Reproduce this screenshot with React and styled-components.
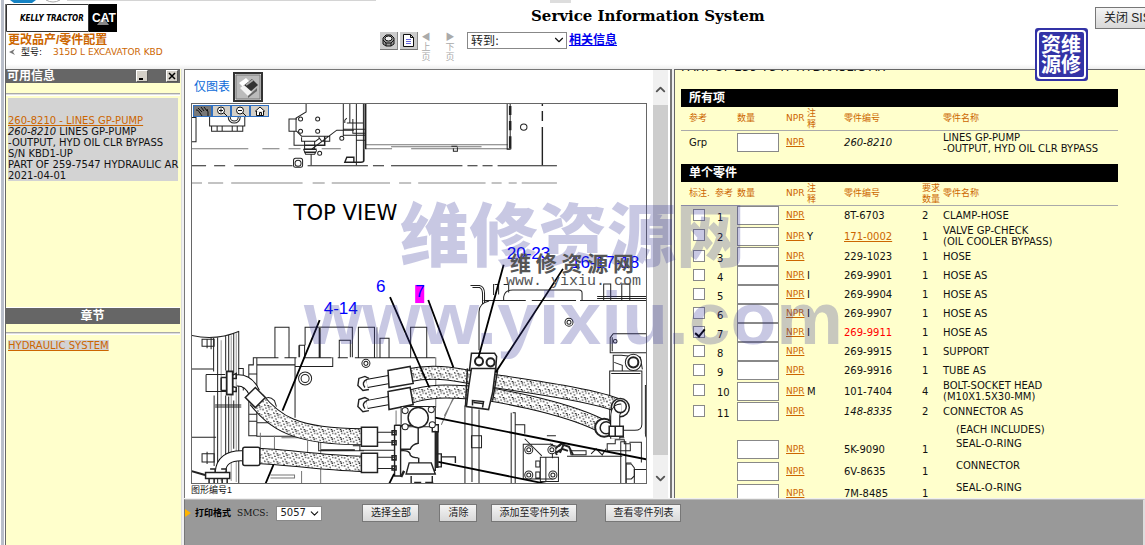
import React from "react";
import styled, { createGlobalStyle, css } from "styled-components";
import { ChevronDown, ChevronUp } from "lucide-react";

const sans = `"DejaVu Sans", "Noto Sans CJK SC", sans-serif`;
const cjk = `"Liberation Sans", "Noto Sans CJK SC", sans-serif`;
const orange = "#cc6600";
const cream = "#ffffcc";

const GlobalStyle = createGlobalStyle`
    * {
        box-sizing: border-box;
    }
    body {
        margin: 0;
        background: #fff;
        overflow: hidden;
    }
    h1, h2, p {
        margin: 0;
    }
    button, input, select {
        font: inherit;
        margin: 0;
        padding: 0;
    }
`;

const Page = styled.div`
    position: relative;
    display: flex;
    flex-direction: column;
    height: 100vh;
    overflow: hidden;
    border-left: 1px solid #fff;
    font-family: ${sans};
    font-size: 10px;
    line-height: 11px;
    color: #111;
`;

const Shell = styled.div`
    flex: 1;
    min-height: 0;
    display: flex;
    flex-direction: column;
    border-left: 3px solid #b9bec9;
    padding-left: 1px;
`;

const BrowserEdge = styled.svg`
    display: block;
    flex: none;
    width: 100%;
    height: 4px;
`;

const Header = styled.header`
    flex: none;
    display: grid;
    grid-template-columns: 374px minmax(0, 1fr) 50px;
    height: 65px;
    border-left: 1px solid #777;
    background: linear-gradient(#fff 60px, #eee);
`;

const Logo = styled.svg`
    display: block;
    width: 112px;
    height: 28px;
`;

const ProductLink = styled.a`
    display: block;
    margin-left: 2px;
    font: bold 12px/16px ${cjk};
    color: ${orange};
    text-decoration: none;
`;

const Model = styled.p`
    display: flex;
    align-items: center;
    gap: 6px;
    margin-left: 3px;
    font-size: 9px;
    line-height: 8px;
    b {
        font-weight: 400;
        margin-left: 5px;
        color: ${orange};
    }
`;

const Title = styled.h1`
    padding: 5px 0 0 151px;
    font: bold 15px/15px "DejaVu Serif", serif;
    color: #000;
    white-space: nowrap;
`;

const Tools = styled.div`
    display: flex;
    align-items: flex-start;
    padding-top: 8px;
`;

const ToolButton = styled.button`
    width: 18px;
    height: 18px;
    margin-right: 2px;
    border: 0;
    border-bottom: 1px solid #777;
    border-right: 1px solid #888;
    background: #ccc;
    svg {
        display: block;
        width: 17px;
        height: 17px;
    }
`;

const PageTurn = styled.button`
    width: 12px;
    margin: 0 0 0 ${(props) => (props.$next ? 12 : 0)}px;
    padding: 0;
    border: 0;
    background: none;
    color: #aaa;
    font: 9px/10px ${cjk};
    span {
        display: block;
    }
`;

const SelectBox = styled.span`
    position: relative;
    display: inline-block;
    width: ${(props) => props.$width}px;
    margin-left: ${(props) => props.$gap}px;
    select {
        display: block;
        appearance: none;
        width: 100%;
        height: ${(props) => props.$height}px;
        padding: 0 3px;
        border: 1px solid #888;
        border-radius: 0;
        background: #fff;
        color: #222;
        font-size: ${(props) => props.$size}px;
        line-height: 12px;
    }
    svg {
        position: absolute;
        right: 1px;
        top: 1px;
        pointer-events: none;
    }
`;

const RelatedLink = styled.a`
    margin-left: 2px;
    font: bold 12px/16px ${cjk};
    color: #0000ee;
`;

const GreyButton = styled.button`
    height: 18px;
    width: ${(props) => props.$width}px;
    border: 1px solid #777;
    background: linear-gradient(#f4f4f4, #d8d8d8);
    color: #222;
    font: 10px/14px ${cjk};
    white-space: nowrap;
    ${(props) =>
        props.$large &&
        css`
            height: 22px;
            margin-top: 3px;
            padding-left: 8px;
            text-align: left;
            font-size: 12px;
            overflow: hidden;
            border-right: 0;
        `}
`;

const Frames = styled.main`
    flex: 1;
    min-height: 0;
    display: grid;
    grid-template-columns: 176px minmax(0, 1fr) 471px;
    grid-template-rows: minmax(0, 1fr) 46px;
    column-gap: 2px;
    row-gap: 1px;
    border-left: 1px solid #666;
    background: #f0f0f0;
`;

const Side = styled.aside`
    grid-row: 1 / 3;
    display: flex;
    flex-direction: column;
    padding-right: 1px;
    border-right: 1px solid #ddd;
    background: ${cream};
    min-height: 0;
`;

const SideBar = styled.h2`
    flex: none;
    display: flex;
    align-items: center;
    justify-content: ${(props) => (props.$center ? "center" : "flex-start")};
    gap: 18px;
    height: ${(props) => (props.$center ? 16 : 14)}px;
    padding: 0 2px 0 1px;
    background: #666;
    color: #fff;
    font: bold 12px/14px ${cjk};
    span {
        flex: ${(props) => (props.$center ? "none" : 1)};
    }
`;

const WindowButton = styled.button`
    width: 12px;
    height: 12px;
    border: 1px solid;
    border-color: #fff #555 #555 #fff;
    background: #d4d0c8;
    svg {
        display: block;
        width: 10px;
        height: 10px;
    }
`;

const Rule = styled.hr`
    width: 100%;
    height: 3px;
    margin: ${(props) => props.$top}px 0 2px;
    border: 0;
    border-top: 1px solid #aaa;
    border-bottom: 1px solid #fff;
    background: #ddd;
`;

const InfoCard = styled.div`
    margin: 0 2px;
    padding-top: 17px;
    background: #d3d3d3;
    white-space: nowrap;
    a {
        color: ${orange};
    }
`;

const SideTop = styled.section`
    flex: 0 0 239px;
    border-bottom: 1px solid #fff;
`;

const ChapterLink = styled.a`
    align-self: flex-start;
    margin: 3px 2px;
    background: #d3d3d3;
    color: ${orange};
`;

const Viewer = styled.section`
    display: flex;
    min-height: 0;
    overflow: hidden;
    border: 1px solid #777;
    border-width: 1px 2px 0 1px;
    background: #fff;
`;

const ViewerBody = styled.div`
    flex: 1;
    min-width: 0;
    display: flex;
    flex-direction: column;
    padding: 0 6px;
`;

const ViewerHead = styled.div`
    flex: none;
    display: flex;
    align-items: center;
    height: 33px;
    gap: 3px;
    padding-left: 3px;
    font: 12px/16px ${cjk};
    a {
        color: #0a6ad8;
        text-decoration: none;
    }
`;

const PrintButton = styled.button`
    width: 30px;
    height: 30px;
    border: 2px solid #333;
    background: #ddd;
    svg {
        display: block;
        width: 26px;
        height: 26px;
    }
`;

const Canvas = styled.div`
    position: relative;
    flex: 1;
    min-height: 0;
    border: 1px solid #666;
    > svg {
        display: block;
        width: 100%;
        height: 100%;
    }
`;

const CanvasTools = styled.div`
    position: absolute;
    top: 1px;
    left: 1px;
    display: flex;
    button {
        width: 19px;
        height: 12px;
        border: 1px solid #2f6fc0;
        background: #d4d0c8;
    }
    button:first-child {
        background: #777;
    }
    svg {
        display: block;
        width: 17px;
        height: 10px;
    }
`;

const Caption = styled.p`
    flex: none;
    height: 14px;
    overflow: hidden;
    padding-top: 1px;
    font: 9px/11px ${cjk};
    span {
        display: block;
        padding-left: 6px;
    }
`;

const Scroll = styled.div`
    flex: none;
    display: flex;
    flex-direction: column;
    width: 15px;
    margin-right: 2px;
    background: #f0f0f0;
    button {
        height: 35px;
        border: 0;
        background: none;
        color: #555;
    }
    button:last-child {
        height: 43px;
    }
    svg {
        display: block;
        margin: 3px auto 0;
    }
`;

const Thumb = styled.div`
    flex: 1;
    background: #cdcdcd;
`;

const Parts = styled.section`
    min-height: 0;
    overflow: hidden;
    padding: 0 27px 0 6px;
    border-top: 1px solid #666;
    border-left: 1px solid #666;
    background: ${cream};
`;

const PartOf = styled.p`
    margin-top: -8px;
    height: 27px;
    font-size: 12px;
    line-height: 11px;
`;

const Bar = styled.h2`
    height: 18px;
    margin-top: ${(props) => props.$top || 0}px;
    padding-left: 8px;
    background: #000;
    color: #fff;
    font: bold 12px/18px ${cjk};
`;

const Table = styled.table`
    width: 100%;
    table-layout: fixed;
    border-collapse: separate;
    border-spacing: 0;
    td, th {
        padding: 0;
        text-align: left;
        font-weight: 400;
        white-space: nowrap;
    }
    th {
        height: 24px;
        color: ${orange};
        font-size: 9px;
        border-bottom: 1px solid #aaa;
    }
    a {
        color: ${orange};
    }
    td:first-child, th:first-child {
        padding-left: 8px;
    }
`;

const Row = styled.tr`
    height: ${(props) => props.$height}px;
    td:last-child {
        vertical-align: ${(props) => (props.$child ? "top" : "middle")};
        padding-left: ${(props) => (props.$child ? 13 : 0)}px;
    }
`;

const NprCell = styled.td`
    font-size: 9px;
`;

const Quantity = styled.input`
    display: block;
    width: 42px;
    height: 19px;
    border: 1px solid #888;
    background: #fff;
`;

const Check = styled.input`
    appearance: none;
    display: block;
    width: 12px;
    height: 12px;
    margin: 0 0 2px 4px !important;
    border: 1px solid #888;
    background: #fff;
    &:checked::after {
        content: "";
        display: block;
        width: 4px;
        height: 8px;
        margin-left: 3px;
        border: solid #000;
        border-width: 0 2px 2px 0;
        transform: rotate(40deg);
    }
`;

const RefCell = styled.td`
    && {
        padding: 3px 0 0 2px;
    }
`;

const NumberCell = styled.td`
    color: ${(props) => (props.$active ? "#ff0000" : "inherit")};
    font-style: ${(props) => (props.$italic ? "italic" : "normal")};
`;

const GroupText = styled.span`
    display: block;
    padding-top: 3px;
`;

const Footer = styled.footer`
    grid-column: 2 / 4;
    display: flex;
    align-items: flex-start;
    padding-top: 4px;
    border-top: 1px solid #bbb;
    border-left: 1px solid #777;
    border-right: 2px solid #ddd;
    background: #999;
`;

const PrintFormat = styled.a`
    display: flex;
    align-items: center;
    gap: 4px;
    height: 18px;
    color: #000;
    text-decoration: none;
    font: bold 9px/18px "Noto Sans CJK SC", sans-serif;
    svg {
        width: 6px;
        height: 10px;
    }
`;

const SmcsLabel = styled.label`
    display: flex;
    align-items: center;
    height: 18px;
    margin-left: 6px;
    font: 9px/18px "DejaVu Serif", serif;
    select {
        font-family: ${sans};
    }
`;

const Actions = styled.div`
    display: flex;
    margin-left: 40px;
    button:nth-child(2) {
        margin-left: 20px;
    }
    button:nth-child(3) {
        margin-left: 14px;
    }
    button:nth-child(4) {
        margin-left: 28px;
    }
`;

const Watermark = styled.div`
    position: absolute;
    top: 192px;
    left: 303px;
    pointer-events: none;
    white-space: nowrap;
    color: rgba(51, 51, 150, 0.27);
    font: bold 75px/84px "Liberation Sans", sans-serif;
    span {
        display: block;
        margin-bottom: 6px;
        padding-left: 96px;
        font: 900 69px/78px "Noto Sans CJK SC", sans-serif;
    }
`;

const SmallMark = styled.div`
    position: absolute;
    top: 251px;
    left: 505px;
    pointer-events: none;
    white-space: pre;
    color: #555;
    font: 15px/18px "Liberation Mono", monospace;
    span {
        display: block;
        padding-left: 4px;
        font: bold 21px/22px "Noto Sans CJK SC", sans-serif;
    }
`;

const Stamp = styled.div`
    position: absolute;
    top: 28px;
    right: 57px;
    width: 53px;
    height: 53px;
    padding: 2px;
    border-radius: 3px;
    background: #3333a6;
    div {
        height: 49px;
        padding: 2px;
        border: 2px solid #fff;
        border-radius: 4px;
        color: #fff;
        font: bold 20px/20px "Noto Sans CJK SC", sans-serif;
        white-space: pre;
    }
`;

const parts = [
    { ref: 1, number: "8T-6703", qty: 2, name: "CLAMP-HOSE" },
    { ref: 2, note: "Y", number: "171-0002", link: true, qty: 1, name: "VALVE GP-CHECK", detail: "(OIL COOLER BYPASS)" },
    { ref: 3, number: "229-1023", qty: 1, name: "HOSE" },
    { ref: 4, note: "I", number: "269-9901", qty: 1, name: "HOSE AS" },
    { ref: 5, note: "I", number: "269-9904", qty: 1, name: "HOSE AS" },
    { ref: 6, note: "I", number: "269-9907", qty: 1, name: "HOSE AS" },
    { ref: 7, note: "I", number: "269-9911", active: true, qty: 1, name: "HOSE AS" },
    { ref: 8, number: "269-9915", qty: 1, name: "SUPPORT" },
    { ref: 9, number: "269-9916", qty: 1, name: "TUBE AS" },
    { ref: 10, note: "M", number: "101-7404", qty: 4, name: "BOLT-SOCKET HEAD", detail: "(M10X1.5X30-MM)" },
    { ref: 11, number: "148-8335", italic: true, qty: 2, name: "CONNECTOR AS" },
    { group: "(EACH INCLUDES)" },
    { number: "5K-9090", qty: 1, name: "SEAL-O-RING", child: true },
    { number: "6V-8635", qty: 1, name: "CONNECTOR", child: true },
    { number: "7M-8485", qty: 1, name: "SEAL-O-RING", child: true },
];

const rowHeight = (part) => {
    if (part.group) return 17;
    return part.detail || part.child ? 22 : 19;
};

const Columns = () => (
    <colgroup>
        {[34, 22, 49, 21, 37, 78, 21].map((width, i) => (
            <col key={i} style={{ width }} />
        ))}
        <col />
    </colgroup>
);

const Note = () => (
    <>
        注
        <br />
        释
    </>
);

const Hose = ({ d, width = 15 }) => (
    <>
        <path d={d} stroke="#111" strokeWidth={width} />
        <path d={d} stroke="#fff" strokeWidth={width - 2} />
        <path d={d} stroke="url(#stipple)" strokeWidth={width - 2} />
    </>
);

const Tube = ({ d, width = 9 }) => (
    <>
        <path d={d} stroke="#111" strokeWidth={width} />
        <path d={d} stroke="#fff" strokeWidth={width - 2} />
    </>
);

const Bolts = ({ points, r = 2 }) =>
    points.map(([x, y]) => (
        <g key={`${x}-${y}`}>
            <circle cx={x} cy={y} r={r} fill="#fff" />
            {r > 3 && <circle cx={x} cy={y} r={r - 2} />}
        </g>
    ));

const Diagram = () => (
    <svg viewBox="192 105 454 377" preserveAspectRatio="xMinYMin slice" fill="none" stroke="#222" strokeWidth="1" role="img" aria-label="TOP VIEW">
        <defs>
            <pattern id="stipple" width="9" height="8" patternUnits="userSpaceOnUse">
                <path d="M1 1h1.500M5 2l1 1M8 0v1M3 4l1 1M6 5h1.500M0 6h1M4 7l1 1M8 6l-1 1" stroke="#000" strokeWidth="1" />
            </pattern>
        </defs>

        {/* frame at the top */}
        <path d="M191 149.500h57M262 149.500h17M288 149.500h12M321 149.500h19M365 145.500h141M365 149.500h26M410 149.500h100M390 147.500h90" stroke="#777" />
        <path d="M191 166.500h15M214 166.500h11M234 166.500h58M307 166.500h60M372 166.500h11M390 166.500h71M466 166.500h10M481 166.500h10M496 166.500h59" />
        <path d="M191 183.500h11M208 183.500h15M231 183.500h71M312 183.500h12M331 183.500h58M398 183.500h12M417 183.500h67M490 183.500h10M507 183.500h8M520 183.500h35" stroke="#888" />
        <path d="M191 118.500h5v24h-5M209.500 117v10h35v-10M211.500 127v5h31v-5M217 127v5M222 127v5M232 127v5M237 127v5" />
        <circle cx="234" cy="118" r="6" />
        <circle cx="234" cy="118" r="4" />
        <path d="M305.500 104v9l-10 6v13h-7v-12h8M293.500 132v14h10M296 132l5 5h28v5h-8l-3-4M301 138v4h14l4-3M304 142v8h10v-8M303 150l2 5h9l2-4M310.500 155v11M311 150l25-19h17" />
        <path d="M303 150h13M304 153h11M324 137v9h-20" strokeWidth="1.500" />
        <path d="M342.500 104v33M346 124h17M349 104v20M352 120v14h12M346 119l-2 2v3M355.500 104v62M362.500 104v58M342 130h22M342 136h22M356 141h8" />
        <path d="M364.500 104v46" strokeWidth="2" />
        <path d="M363 150v11q0 2-3 2h-16l2-5h7v5" strokeWidth="1.400" />
        <Bolts points={[[300, 120], [317, 120], [300, 132], [317, 132], [341, 139], [319, 154]]} />
        <rect x="293" y="159" width="9" height="9" rx="2" />
        <circle cx="297.500" cy="164" r="3" />
        <path d="M505.500 104v46h3v-46M450 147h6M452 149v3h4v-4" />
        <path d="M508.500 107v9M508.500 122v9M508.500 137v12" strokeWidth="2.500" />
        <circle cx="522" cy="128" r="3.200" />
        <path d="M540.500 104v3M540.500 112v10M540.500 128v38" strokeWidth="1.400" />

        {/* tank on the right */}
        <path d="M469 285.500h9q5 1 5 8v9M471 287.500h7q3 1 3 7v9M493 284.500h4v10M502 284.500h5v8M492 284v11M477.500 350v-38q0-9 10-11M482 300.500h42M530 300.500h44M578 300.500h69M502 300v-3q1-7 9-7h66q3 0 3 3v7M595 296.500h52M595 298.500h52M601.500 300v-16h7v16M619.500 300v-16h8v16" />
        <Bolts points={[[567, 322]]} r={4} />
        <path d="M470.500 405v76M463.500 405v78M477.500 409v74M509.500 412v71M513.500 412v71M511 412h3M514 424h9v9M470 435h10v12h-10z" />
        <path d="M647 333.500h-36l-3 4v15h39M610 337v14" />
        <circle cx="613" cy="341" r="1.800" />
        <path d="M611 370v-15h8l9 1 10 1 2 12M612 362l8 3v5M607.500 370.500h32v53q0 6-7 6h-18q-7 0-7-6zM609 373h29M647 385h-4v48q0 5 4 5M644 390h3" />
        <circle cx="631" cy="362" r="8" fill="#fff" />
        <circle cx="631" cy="362" r="5" strokeWidth="2" />
        <path d="M443 415l13-24M440 424l12-27M395 410v15M434.500 357v50" stroke="#777" />

        {/* cover at the lower right */}
        <path d="M521.500 443.500h29v14M521.500 443v35h30M523 438l17 17M538.500 456.500h18v24h-18zM544 456v24M534 460h4v6h-4zM534 471h4v6h-4zM545 435h9M548 443q10 6 12-1M565 455.500h55M568 450h16v4h-15zM589 453l5-5 6 6 4-6M623.500 441v42h-5v-42zM627 441.500h12v20M629 462h-5v20M632 468.500h15M632 468v15" />
        <path d="M552 449l7-6 8 3 4 8M554 452l6-4 6 2M550 444l5 10M562 443l-4 9" strokeWidth="2" />
        <Bolts points={[[527, 449], [550, 449], [527, 474], [551, 474]]} r={4} />
        <path d="M624 463h5l3 4v8l-3 3h-5M605 450v-7h8v-4h9v4h6v7zM612 437h10" />

        {/* tank on the left */}
        <path d="M191 335q24 6 48-4M213.500 337v34M217.500 337v146M225.500 336v34M228.500 335v36M233.500 333v40M238.500 331v152M225.500 395v88M228.500 396v60M233.500 400v48M214 395v70" />
        <path d="M221 340v140M231 335v145M236 333v148" stroke="#999" />
        <path d="M191 368.500h22M191 436.500h25M206 374h19M206 374v17h20M202 339h12v7h-12zM207 339v9M211 337v12M202 453h12v8h-12zM207 451v12M215 404.500h26M215 406.500h26M238 368h5v22" />
        <path d="M191 470l14 4" strokeWidth="2" />

        {/* engine */}
        <path d="M248 364.500h5v-7h25M284 357.500h12M303 357.500h28M337 357.500h10M354 357.500h80M256.500 357v78M274.500 357v-30h14v30M304 357v-12h-5v12M304.500 345v-18h14v30M319.500 357v-30h32v30M338.500 357v-17h11v17M357.500 357v-30h16v30M379 357v-19h9v19M409.500 357v-30h16v30M256 364.500h38M294.500 357v60M294 366h38v-9M248.500 364v71h8M248 373.500h8M248 413.500h8M248 420.500h8M256 422h20M256 435.500h38" />
        <path d="M313 327h35M376 327v30M298 345v12M260 432v16M274 435v14M307 440v12M320 440v43M270 474h24v3h-24M301 470v13M281 437h30v-6" stroke="#777" />
        <path d="M318 440v10h45M320 449h34M352 445h7v5" />
        <circle cx="304.500" cy="378" r="6.500" />
        <circle cx="304.500" cy="378" r="4" />
        <Bolts points={[[365, 363]]} r={4} />
        <path d="M262 400q6-6 12 0l2 6" />

        {/* hoses */}
        <Tube d="M236 380q12-1 18 12" width={12} />
        <rect x="226.500" y="371" width="6" height="23" fill="#fff" strokeWidth="1.800" />
        <path d="M232 375l4-2v5h-4M232 386l4 1v4h-4M221 377h5M221 390h5M221 377v13" strokeWidth="1.500" />
        <Hose d="M256 399C274 421 293 436 361 436" width={17} />
        <path d="M255 387l10 10-10 10-10-10z" fill="#fff" strokeWidth="1.500" />
        <Tube d="M243 455q-22-1-23 17" width={11} />
        <path d="M205.500 471.500h24v6h-24zM210 468h5v3M221 468h5v3M209 478v5h5v-5M222 478v5h5v-5" fill="#fff" strokeWidth="1.500" />
        <Hose d="M258 455C285 456 320 462 361 463" width={16} />
        <rect x="242.500" y="446.500" width="17" height="18" rx="2" fill="#fff" strokeWidth="1.500" />
        <path d="M360.500 426.500h16v19h-16zM360.500 452.500h16v19h-16z" fill="#fff" strokeWidth="1.500" />
        <path d="M377 431.500h16M377 441.500h16M377 456.500h16M377 467.500h16M358 449.500h35" />
        <Hose d="M407 375C430 370 450 373 470 377S580 391 614 404" width={14} />
        <Hose d="M407 397C430 389 450 391 470 392S560 406 597 424" width={14} />
        <Tube d="M388 379l-22 4" width={9} />
        <Tube d="M388 400l-22 4" width={9} />
        <path d="M368 378l-4-2-6 2-1 7 5 5 6-1M366 379q-6 3-2 8M368 399l-4-2-6 2-1 7 5 5 6-1M366 400q-6 3-2 8" strokeWidth="1.400" />
        <path d="M387 370l22-4 3 17-24 4zM387 391l22-4 3 17-24 5z" fill="#fff" strokeWidth="1.500" />

        {/* clamp */}
        <path d="M468 370l2-17h23l2 3-1 14z" fill="#fff" strokeWidth="1.500" />
        <path d="M470 368h24l-3 24-4 17-22-3 2-18z" fill="#fff" strokeWidth="1.500" />
        <path d="M466 368l-2 38M496 370l-5 30M471 405v-5l11 1-1 6M472 402l9 1" strokeWidth="1.500" />
        <circle cx="477.500" cy="361" r="4" fill="#fff" strokeWidth="2" />
        <circle cx="489" cy="362" r="4" fill="#fff" strokeWidth="2" />

        {/* elbows on the right */}
        <circle cx="602" cy="427" r="9" fill="#fff" strokeWidth="2" />
        <circle cx="604" cy="427" r="6" strokeWidth="1.500" />
        <circle cx="618" cy="407" r="9" fill="#fff" strokeWidth="1.500" />
        <Tube d="M613 438v-22q0-8 6-8" width={10} />
        <circle cx="618" cy="406" r="6" strokeWidth="1.500" />
        <path d="M607 425.500h14v10h-14zM613 426v10" fill="#fff" strokeWidth="1.500" />

        {/* valve block */}
        <path d="M400 406h34v20h-34z" fill="#fff" />
        <path d="M394 424.500h24v-4M393.500 424v51h6v-51M399 448.500h10q2-5 8-6v-20M399 450q10-1 10 4 2 3 8 3M417.500 457v5M405 473l3-11h22l4 11zM410 475v8h21v-8M431 424h6v7h-6zM434 430v40M434 453h6v13h-6M440 456h14v6" fill="#fff" strokeWidth="1.400" />
        <path d="M413 482h7M424 482h8M436 431v36M403 470l-3 6" strokeWidth="2.500" />
        <circle cx="417" cy="417" r="10" fill="#fff" strokeWidth="1.500" />
        <Bolts points={[[404, 410], [430, 409], [404, 426], [431, 424]]} r={3} />
        <path d="M391 430h4v4h-4zM391 440h4v4h-4zM391 455h4v4h-4zM391 465h4v4h-4z" strokeWidth="1.500" />

        {/* leaders */}
        <path d="M319 320L282 410M273 464l-8 19M389 297l39 90M427 300l25 67M502 265l-25 92M561 269l-67 103M434 417l213 42M437 461l108 22M393 473l-5 10" stroke="#000" strokeWidth="1.800" />

        <rect x="414" y="285" width="9" height="18" fill="#ff00ff" stroke="none" />
        <g fill="#0000ff" stroke="none" fontFamily="Liberation Sans, sans-serif" fontSize="17">
            <text x="505" y="259">20-23</text>
            <text x="569" y="268">16-17-18</text>
            <text x="323" y="314">4-14</text>
            <text x="375" y="292">6</text>
            <text x="414" y="297">7</text>
        </g>
        <text x="293" y="220" fill="#000" stroke="none" fontFamily="DejaVu Sans, sans-serif" fontSize="21">
            TOP VIEW
        </text>
    </svg>
);

const PartRow = ({ part }) =>
    part.group ? (
        <Row $height={rowHeight(part)} $child>
            <td colSpan="7" />
            <td>
                <GroupText>{part.group}</GroupText>
            </td>
        </Row>
    ) : (
        <Row $height={rowHeight(part)} $child={part.child}>
            <td>{part.ref && <Check type="checkbox" defaultChecked={part.active} aria-label={`标注 ${part.ref}`} />}</td>
            <RefCell>{part.ref}</RefCell>
            <td>
                <Quantity aria-label={`数量 ${part.number}`} />
            </td>
            <NprCell>
                <a href="#npr">NPR</a>
            </NprCell>
            <td>{part.note}</td>
            <NumberCell $active={part.active} $italic={part.italic}>
                {part.link ? <a href="#part">{part.number}</a> : part.number}
            </NumberCell>
            <td>{part.qty}</td>
            <td>
                {part.name}
                {part.detail && <br />}
                {part.detail}
            </td>
        </Row>
    );

export default () => (
    <Page>
        <GlobalStyle />
        <Shell>
            <BrowserEdge>
                <path d="M5 0h26l-4 3H9z" fill="#1583c4" />
                <path d="M41 0q7 4 14 0" fill="none" stroke="#aaa" />
                <path d="M62 0h309" stroke="#aaa" />
                <path d="M545 0h21v3h-21z" fill="#ddd" />
            </BrowserEdge>
            <Header>
                <div>
                    <Logo viewBox="0 0 112 28" role="img" aria-label="Kelly Tractor CAT">
                        <path d="M.5.500h82v27H.500z" fill="#fff" stroke="#333" />
                        <path d="M83 0h28v28H83z" />
                        <text x="14" y="17" fontFamily="DejaVu Sans Condensed, DejaVu Sans, sans-serif" fontSize="8" fontWeight="bold" fontStyle="italic">
                            KELLY TRACTOR
                        </text>
                        <path d="M91 21l6-8 6 8z" fill="#888" />
                        <text x="86" y="18" fill="#fff" fontFamily="Liberation Sans, sans-serif" fontSize="12" fontWeight="bold">
                            CAT
                        </text>
                    </Logo>
                    <ProductLink href="#product">更改品产/零件配置</ProductLink>
                    <Model>
                        <svg width="6" height="6" viewBox="0 0 6 6" fill="#777">
                            <path d="M6 0L0 3l6 3-2-3z" />
                        </svg>
                        型号: <b>315D L EXCAVATOR KBD</b>
                    </Model>
                </div>
                <div>
                    <Title>Service Information System</Title>
                    <Tools>
                        <ToolButton aria-label="零件">
                            <svg viewBox="0 0 17 17" fill="#999" stroke="#111">
                                <path d="M3 6l3-3h5l3 3v6l-3 2H6l-3-2z" />
                                <ellipse cx="8.500" cy="6.500" rx="3.500" ry="2.500" fill="#eee" />
                                <path d="M3 8l3 3h5l3-3M6 11v3M11 11v3" fill="none" />
                            </svg>
                        </ToolButton>
                        <ToolButton aria-label="文档">
                            <svg viewBox="0 0 17 17" fill="#fff" stroke="#111">
                                <path d="M3.500 2.500h7l3 3v9h-10zM10.500 2.500v3h3" />
                                <path d="M6 7.500h5M6 9.500h5M6 11.500h5" stroke="#66d" />
                            </svg>
                        </ToolButton>
                        <PageTurn>
                            <span>◀</span>
                            <span>上</span>
                            <span>页</span>
                        </PageTurn>
                        <PageTurn $next>
                            <span>▶</span>
                            <span>下</span>
                            <span>页</span>
                        </PageTurn>
                        <SelectBox $width={100} $height={17} $gap={11} $size={12}>
                            <select aria-label="转到">
                                <option>转到:</option>
                            </select>
                            <ChevronDown size={14} />
                        </SelectBox>
                        <RelatedLink href="#related">相关信息</RelatedLink>
                    </Tools>
                </div>
                <div>
                    <GreyButton $large $width={50}>
                        关闭 SIS
                    </GreyButton>
                </div>
            </Header>
            <Frames>
                <Side>
                    <SideTop>
                        <SideBar>
                            <span>可用信息</span>
                            <WindowButton aria-label="最小化">
                                <svg viewBox="0 0 10 10">
                                    <path d="M2 8h4" stroke="#000" strokeWidth="2" />
                                </svg>
                            </WindowButton>
                            <WindowButton aria-label="关闭">
                                <svg viewBox="0 0 10 10">
                                    <path d="M2 2l6 6M8 2L2 8" stroke="#000" strokeWidth="1.500" />
                                </svg>
                            </WindowButton>
                        </SideBar>
                        <Rule $top={10} />
                        <InfoCard>
                            <a href="#pump">260-8210 - LINES GP-PUMP</a>
                            <br />
                            <i>260-8210</i> LINES GP-PUMP
                            <br />
                            -OUTPUT, HYD OIL CLR BYPASS
                            <br />
                            S/N KBD1-UP
                            <br />
                            PART OF 259-7547 HYDRAULIC AR
                            <br />
                            2021-04-01
                        </InfoCard>
                    </SideTop>
                    <SideBar $center>
                        <span>章节</span>
                    </SideBar>
                    <Rule $top={8} />
                    <ChapterLink href="#chapter">HYDRAULIC SYSTEM</ChapterLink>
                </Side>
                <Viewer>
                    <ViewerBody>
                        <ViewerHead>
                            <a href="#graphic">仅图表</a>
                            <PrintButton aria-label="打印">
                                <svg viewBox="0 0 26 26">
                                    <path d="M1 1h24v24H1z" fill="#bbb" stroke="#777" />
                                    <path d="M4 9l7-5 5 5-6 6z" fill="#fff" />
                                    <path d="M8 12l9-7 6 6-8 7z" fill="#333" />
                                    <path d="M5 14l4-3 8 7-4 4z" fill="#f4f4f4" />
                                    <path d="M13 22l9-8v3l-9 7z" fill="#666" />
                                    <path d="M11 11l7-5" stroke="#aaa" strokeWidth="2" />
                                </svg>
                            </PrintButton>
                        </ViewerHead>
                        <Canvas>
                            <Diagram />
                            <CanvasTools>
                                <button aria-label="移动">
                                    <svg viewBox="0 0 17 10" fill="none" stroke="#111">
                                        <path d="M2 4q2-1 4 3l2 3M4 2l4 4M7 1l3 4M10 1l3 4M13 3l1 3v4" />
                                    </svg>
                                </button>
                                <button aria-label="放大">
                                    <svg viewBox="0 0 17 10" fill="#fff" stroke="#111">
                                        <circle cx="8" cy="4.500" r="3.500" />
                                        <path d="M6 4.500h4M8 2.500v4M11 7l3 3" />
                                    </svg>
                                </button>
                                <button aria-label="缩小">
                                    <svg viewBox="0 0 17 10" fill="#fff" stroke="#111">
                                        <circle cx="8" cy="4.500" r="3.500" />
                                        <path d="M6 4.500h4M11 7l3 3" />
                                    </svg>
                                </button>
                                <button aria-label="主页">
                                    <svg viewBox="0 0 17 10" fill="#fff" stroke="#111">
                                        <path d="M5.500 5v4.500h7V5M4 5.500L9 1l5 4.500M8.500 9.500v-3h2v3" />
                                    </svg>
                                </button>
                            </CanvasTools>
                        </Canvas>
                        <Caption>
                            图形编号1
                            <span>g1279366</span>
                        </Caption>
                    </ViewerBody>
                    <Scroll>
                        <button aria-label="向上">
                            <ChevronUp size={15} strokeWidth={3} />
                        </button>
                        <Thumb />
                        <button aria-label="向下">
                            <ChevronDown size={15} strokeWidth={3} />
                        </button>
                    </Scroll>
                </Viewer>
                <Parts>
                    <PartOf>PART OF 259-7547 HYDRAULIC AR</PartOf>
                    <Bar>所有项</Bar>
                    <Table>
                        <Columns />
                        <thead>
                            <tr>
                                <th colSpan="2">参考</th>
                                <th>数量</th>
                                <th>NPR</th>
                                <th>
                                    <Note />
                                </th>
                                <th colSpan="2">零件编号</th>
                                <th>零件名称</th>
                            </tr>
                        </thead>
                        <tbody>
                            <Row $height={23}>
                                <td colSpan="2">Grp</td>
                                <td>
                                    <Quantity aria-label="数量 260-8210" />
                                </td>
                                <NprCell>
                                    <a href="#npr">NPR</a>
                                </NprCell>
                                <td />
                                <NumberCell colSpan="2" $italic>
                                    260-8210
                                </NumberCell>
                                <td>
                                    LINES GP-PUMP
                                    <br />
                                    -OUTPUT, HYD OIL CLR BYPASS
                                </td>
                            </Row>
                        </tbody>
                    </Table>
                    <Bar $top={10}>单个零件</Bar>
                    <Table>
                        <Columns />
                        <thead>
                            <tr>
                                <th>标注.</th>
                                <th>参考</th>
                                <th>数量</th>
                                <th>NPR</th>
                                <th>
                                    <Note />
                                </th>
                                <th>零件编号</th>
                                <th>
                                    要求
                                    <br />
                                    数量
                                </th>
                                <th>零件名称</th>
                            </tr>
                        </thead>
                        <tbody>
                            {parts.map((part, i) => (
                                <PartRow key={i} part={part} />
                            ))}
                        </tbody>
                    </Table>
                </Parts>
                <Footer>
                    <PrintFormat href="#print">
                        <svg viewBox="0 0 6 10">
                            <path d="M0 1l6 4-6 4z" fill="#ffb400" />
                        </svg>
                        打印格式
                    </PrintFormat>
                    <SmcsLabel>
                        SMCS:
                        <SelectBox $width={46} $height={15} $gap={8} $size={10}>
                            <select defaultValue="5057">
                                <option>5057</option>
                            </select>
                            <ChevronDown size={13} />
                        </SelectBox>
                    </SmcsLabel>
                    <Actions>
                        <GreyButton $width={57}>选择全部</GreyButton>
                        <GreyButton $width={38}>清除</GreyButton>
                        <GreyButton $width={86}>添加至零件列表</GreyButton>
                        <GreyButton $width={76}>查看零件列表</GreyButton>
                    </Actions>
                </Footer>
            </Frames>
        </Shell>
        <Watermark>
            <span>维修资源网</span>
            www.yixiu.com
        </Watermark>
        <SmallMark>
            <span>维 修 资 源 网</span>
            www. yixiu. com
        </SmallMark>
        <Stamp>
            <div>{"资维\n源修"}</div>
        </Stamp>
    </Page>
);
